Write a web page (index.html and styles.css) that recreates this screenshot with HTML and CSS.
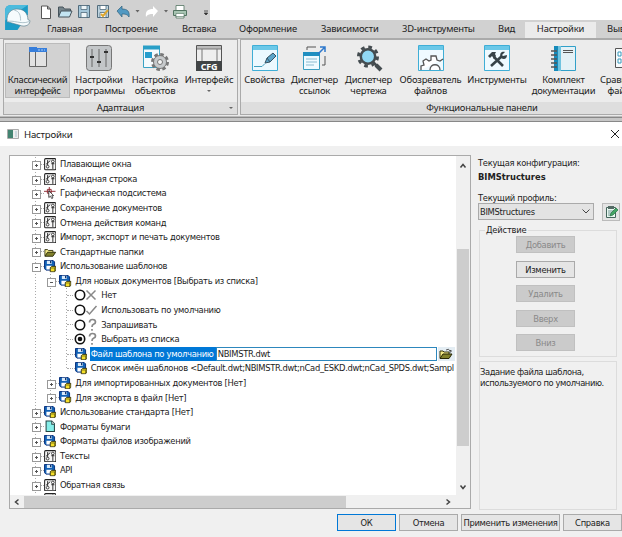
FILE: index.html
```html
<!DOCTYPE html>
<html lang="ru">
<head>
<meta charset="utf-8">
<title>Настройки</title>
<link rel="stylesheet" href="styles.css">
</head>
<body>
<svg class="defs" xmlns="http://www.w3.org/2000/svg">
<symbol id="sliders" viewBox="0 0 12 12"><rect x=".6" y=".6" width="10.8" height="10.8" rx="1" fill="#f8f8f8" stroke="#222"/><path d="M3.500 2v5M8.500 5v5.500M2 6l4-3.500M7 5.500h3" stroke="#222" fill="none" stroke-width=".9"/><circle cx="3.500" cy="8.300" r="1.300" fill="#fff" stroke="#222" stroke-width=".8"/><circle cx="8.500" cy="3.300" r="1.300" fill="#fff" stroke="#222" stroke-width=".8"/></symbol>
<symbol id="disk" viewBox="0 0 13 13"><path d="M.5.5h9l1.500 1.500v8.500h-9L.5 9z" fill="#1261b5" stroke="#062f7c"/><path d="M3 .7h5v3.500H3z" fill="#d9eafa"/><path d="M6.300 1h1.200v2.500H6.300z" fill="#082962"/><path d="M2.500 6h6v4h-6z" fill="#fff"/><path d="M6.500 8 8 6.600h4.300v4L11 12.300H6.500z" fill="#f5df28" stroke="#272710" stroke-width=".9"/><path d="M6.500 8.300H11v4M11 8.300l1.300-1.500" fill="none" stroke="#504c12" stroke-width=".7"/></symbol>
<symbol id="folder" viewBox="0 0 14 12"><path d="M1 10V3h3l1 1h5v2" fill="#f3e986" stroke="#343411"/><path d="M1 10.500 4 6h9l-3 4.500z" fill="#81812b" stroke="#262606"/></symbol>
<symbol id="page" viewBox="0 0 12 12"><path d="M2 1h5.500L10 3.500V11H2z" fill="#86eee9" stroke="#244"/><path d="M7.500 1v3H10" fill="#fff" stroke="#244"/></symbol>
<symbol id="cursor" viewBox="0 0 13 13"><path d="M0 4.500h12M5.500 0v10M3.500 2.500h4v4h-4z" stroke="#912d36" fill="none"/><path d="M5 4v7l1.700-1.500L8 12l1.300-.6-1.200-2.400h2z" fill="#fff" stroke="#222" stroke-width=".8"/></symbol>
</svg>

<div class="app">
<div class="quick">
<svg class="logo" viewBox="0 0 26 26"><path d="M1 25V7q0-6 6-6h16v9L13 25z" fill="#1c9bc6"/><path d="M1 24V7q0-6 6-6h16L1 16z" fill="#4cbbdd"/><path d="M3 17C2 8 8 4 14 5c6 0 9 5 9 10l2 1c0 4-4 6-8 5L3 17z" fill="#f6fbfd" stroke="#537989" stroke-width=".6"/><path d="M3 17c6-2 13 3 21 0M10 6c5 1 6 5 6 10" fill="none" stroke="#a1b8c1" stroke-width=".8"/></svg>
<svg class="qicons" viewBox="0 0 170 16">
<path d="M3.500 2h6l3 3v9.500h-9zM9.500 2v3h3" fill="#fff" stroke="#555"/>
<path d="M20.500 12.500V3H25l1.500 2h6v2" fill="#75848b" stroke="#46535b"/><path d="m20.500 13 2.500-6h11l-2.500 6z" fill="#c3e4f2" stroke="#46535b"/>
<path d="M40.500 1.500h11v12h-11z" fill="#a5c7da" stroke="#526c7c"/><path d="M43 1.500h6v4h-6zM43 8.500h6v5h-6z" fill="#eef5f8" stroke="#526c7c" stroke-width=".8"/>
<path d="M59.500 1.500h11v12h-11z" fill="#bdd3df" stroke="#526c7c"/><path d="M62 1.500h6v4h-6zM62 8.500h6v5h-6z" fill="#fff" stroke="#526c7c" stroke-width=".8"/><path d="m63 10 2 2 5-6" fill="none" stroke="#dda72e" stroke-width="2"/>
<path d="m79 7 5-5v3c5 0 8 2 7 8-2-3-4-3-7-3v3z" fill="#5299c2" stroke="#31627c" stroke-width=".7"/>
<path d="M97.500 6h4l-2 2.500zM126 6h4l-2 2.500z" fill="#666"/>
<path d="m120 7-5-5v3c-5 0-8 2-7 8 2-3 4-3 7-3v3z" fill="#fff"/>
<path d="M138 1.500h8v5h-8zM138 10h8v4h-8z" fill="#fff" stroke="#527361" stroke-width=".8"/><path d="M135.500 6.500h13v5h-13z" fill="#a7c4b2" stroke="#527361"/><path d="M138 9.500h8v3h-8z" fill="#fff" stroke="#527361" stroke-width=".6"/>
<path d="M166 7h4M166.300 9h3.400L168 11z" fill="#333" stroke="#333" stroke-width=".8"/>
</svg>
</div>
<nav class="tabs"><span class="t1">Главная</span><span class="t2">Построение</span><span class="t3">Вставка</span><span class="t4">Оформление</span><span class="t5">Зависимости</span><span class="t6">3D-инструменты</span><span class="t7">Вид</span><span class="t8 current">Настройки</span><span class="t9">Вывод</span></nav>
<div class="ribbon">
<section class="panel adapt">
<div class="tools">
<div class="tool b1 pressed"><svg viewBox="0 0 28 28"><path d="M5.500 7v15.500h17V7M11.500 7v15.500" fill="none" stroke="#666"/><path d="M6 8h5v14H6zM12 8h10v14H12z" fill="#e2e2e2"/><path d="M5 3h8v1h10v4H5z" fill="#377edb"/><path d="M14 6h7" stroke="#a8cef8" stroke-dasharray="2 1"/></svg><span>Классический<br>интерфейс</span></div>
<div class="tool b2"><svg viewBox="0 0 28 28"><rect x="1.500" y="1.500" width="25" height="25" rx="3" fill="#c3c6c8" stroke="#777"/><path d="M7 5v18M14 5v18M21 5v18" stroke="#666"/><path d="M5 13h4M12 18h4M19 8h4" stroke="#333" stroke-width="2"/></svg><span>Настройки<br>программы</span></div>
<div class="tool b3"><svg viewBox="0 0 28 28"><path d="M2.500 2.500h16v21h-16z" fill="#f5fafd" stroke="#3aa2c4"/><path d="M2 1.500h17v4H2z" fill="#299fc7"/><path d="M4 8h7v6H4z" fill="#269dcc"/><circle cx="19" cy="18" r="7.500" fill="none" stroke="#777" stroke-width="3" stroke-dasharray="3.500 2.390"/><circle cx="19" cy="18" r="6.500" fill="#c7cacc" stroke="#777"/><circle cx="19" cy="18" r="2.500" fill="#f5f5f5" stroke="#777"/></svg><span>Настройка<br>объектов</span></div>
<div class="tool b4"><svg viewBox="0 0 28 28"><path d="M1.500 1.500h25v16h-25z" fill="#eee" stroke="#555"/><path d="M2 2h24v3H2z" fill="#bbb"/><path d="M7 5v12M22 5v12M2 5h24" stroke="#777"/><path d="M1 17h26v10H1z" fill="#414446"/><text x="14" y="25.500" text-anchor="middle" class="cfg">CFG</text></svg><span>Интерфейс<br><i class="down"></i></span></div>
</div><footer>Адаптация<i class="down corner"></i></footer>
</section>
<section class="panel functional">
<div class="tools">
<div class="tool f1"><svg viewBox="0 0 28 28"><path d="M1.500 1.500h25v25h-25z" fill="#ecf9ff" stroke="#3faed6"/><path d="M2 2h24v4H2z" fill="#6bc8e8"/><path d="m14 19 2-5 6-5 3 3-6 6z" fill="#5ca5c9" stroke="#365263"/><path d="m16 14 3 4" stroke="#365263"/><path d="M3 22.500h8l3-3" stroke="#429fbd" fill="none"/></svg><span>Свойства</span></div>
<div class="tool f2"><svg viewBox="0 0 28 28"><path d="M6 6V3h9M24 12v9h-3" fill="none" stroke="#555"/><path d="M2.500 8.500h16v17h-16z" fill="#effaff" stroke="#3b9ec1"/><path d="M2 8h17v4H2z" fill="#208fc0"/><path d="M5 15h11M5 18h11M5 21h8" stroke="#8bbbd0"/><path d="m17 10 7-7M19 3h5v5" fill="none" stroke="#2e78cb" stroke-width="1.500"/></svg><span>Диспетчер<br>ссылок</span></div>
<div class="tool f3"><svg viewBox="0 0 28 28"><path d="m18 18 4 4" stroke="#444c50" stroke-width="2.500"/><path d="m21 21 5 5" stroke="#444c50" stroke-width="4"/><circle cx="13" cy="12.500" r="9.500" fill="none" stroke="#444c50" stroke-width="3" stroke-dasharray="3.700 3.760"/><circle cx="13" cy="12.500" r="7.200" fill="#91d8f4" stroke="#444c50" stroke-width="2.500"/></svg><span>Диспетчер<br>чертежа</span></div>
<div class="tool f4"><svg viewBox="0 0 28 28"><path d="M1.500 1.500h25v25h-25z" fill="#effaff" stroke="#3faed6"/><path d="M2 2h24v4H2z" fill="#6bc8e8"/><path d="M4 26v-4l3-1-1-4 3-2 3 2 2-1v-4h5l1 4 3 1 3-2M13 26c0-7 10-7 10 0" fill="#fff" stroke="#555" stroke-width="1.300"/></svg><span>Обозреватель<br>файлов</span></div>
<div class="tool f5"><svg viewBox="0 0 28 28"><path d="M1.500 1.500h25v25h-25z" fill="#effaff" stroke="#3faed6"/><path d="M2 2h24v4H2z" fill="#6bc8e8"/><path d="m8 22 11-10M11 13l9 9" stroke="#374348" stroke-width="2.600"/><path d="m5 12 4-4h4l-1 2 1 2-2 3-2-3-2 2zM22 8l-3 3 1 1 4-1c0 4-3 5-6 3-2-4 0-7 4-6z" fill="#374348"/></svg><span>Инструменты</span></div>
<div class="tool f6"><svg viewBox="0 0 28 28"><path d="M4 2h5v25H4z" fill="#168ab9"/><path d="M8.500 2.500h17v24h-17z" fill="#e4f1f6" stroke="#31a0c9"/><path d="M8 2h3v25H8z" fill="#70c3df"/><path d="M13 6.500h10M13 8.500h10" stroke="#555"/><path d="M1 7h6M1 11h6M1 15h6M1 19h6M1 23h6" stroke="#555" stroke-width="1.500"/></svg><span>Комплект<br>документации</span></div>
<div class="tool f7"><svg viewBox="0 0 28 28"><path d="M5.500 4.500h22v19h-22z" fill="#f7fbfd" stroke="#555"/><path d="M8 8h3v4H8zM13 8h3v4h-3zM8 15h3v4H8zM13 15h3v4h-3z" fill="#fff" stroke="#389abc"/></svg><span>Сравнение<br>файлов</span></div>
</div><footer>Функциональные панели</footer>
</section>
</div>
<div class="edge"></div>
</div>

<main class="dialog">
<header class="title"><svg viewBox="0 0 12 10"><path d="M.5.500h11v9H.5z" fill="#eee" stroke="#aaa"/><path d="M1 1h5v8H1z" fill="#438471"/><path d="M8 2h2v6H8z" fill="#ccd9df"/></svg><h1>Настройки</h1><svg class="close" viewBox="0 0 10 10"><path d="m1 1 8 8M9 1 1 9" stroke="#222"/></svg></header>
<div class="content">
<div class="treebox">
<div class="view">
<div class="tree">
<div class="row"><i class="box plus"></i><svg class="ico"><use href="#sliders"/></svg><span>Плавающие окна</span></div>
<div class="row"><i class="box plus"></i><svg class="ico"><use href="#sliders"/></svg><span>Командная строка</span></div>
<div class="row"><i class="box plus"></i><svg class="ico"><use href="#cursor"/></svg><span>Графическая подсистема</span></div>
<div class="row"><i class="box plus"></i><svg class="ico"><use href="#sliders"/></svg><span>Сохранение документов</span></div>
<div class="row"><i class="box plus"></i><svg class="ico"><use href="#sliders"/></svg><span>Отмена действия команд</span></div>
<div class="row"><i class="box plus"></i><svg class="ico"><use href="#sliders"/></svg><span>Импорт, экспорт и печать документов</span></div>
<div class="row"><i class="box plus"></i><svg class="ico"><use href="#folder"/></svg><span>Стандартные папки</span></div>
<div class="row"><i class="box"></i><svg class="ico"><use href="#disk"/></svg><span>Использование шаблонов</span></div>
<div class="row"><i class="guide"></i><i class="box"></i><svg class="ico"><use href="#disk"/></svg><span>Для новых документов [Выбрать из списка]</span></div>
<div class="row"><i class="guide"></i><i class="guide"></i><i class="guide leaf"></i><svg class="choice" viewBox="0 0 24 14"><circle cx="6" cy="7" r="4.700" fill="#fff" stroke="#111" stroke-width="1.600"/><path d="m12.500 2.500 9 9M21.500 2.500l-9 9" stroke="#888" stroke-width="1.500"/></svg><span>Нет</span></div>
<div class="row"><i class="guide"></i><i class="guide"></i><i class="guide leaf"></i><svg class="choice" viewBox="0 0 24 14"><circle cx="6" cy="7" r="4.700" fill="#fff" stroke="#111" stroke-width="1.600"/><path d="m12.500 8 3 3 7-8" stroke="#888" stroke-width="1.500" fill="none"/></svg><span>Использовать по умолчанию</span></div>
<div class="row"><i class="guide"></i><i class="guide"></i><i class="guide leaf"></i><svg class="choice" viewBox="0 0 24 14"><circle cx="6" cy="7" r="4.700" fill="#fff" stroke="#111" stroke-width="1.600"/><path d="M15.500 4.500q0-3 3-3t3 2.500q0 1.600-2 2.300-1.500.7-1.500 2.700M18 11v1.800" stroke="#888" stroke-width="1.700" fill="none"/></svg><span>Запрашивать</span></div>
<div class="row"><i class="guide"></i><i class="guide"></i><i class="guide leaf"></i><svg class="choice" viewBox="0 0 24 14"><circle cx="6" cy="7" r="4.700" fill="#fff" stroke="#111" stroke-width="1.600"/><circle cx="6" cy="7" r="2.300" fill="#111"/><path d="M15.500 4.500q0-3 3-3t3 2.500q0 1.600-2 2.300-1.500.7-1.500 2.700M18 11v1.800" stroke="#888" stroke-width="1.700" fill="none"/></svg><span>Выбрать из списка</span></div>
<div class="row selected"><i class="guide"></i><i class="guide"></i><i class="guide leaf"></i><svg class="ico"><use href="#disk"/></svg><span class="name">Файл шаблона по умолчанию</span><span class="edit">NBIMSTR.dwt</span><b class="browse"><svg viewBox="0 0 14 12"><use href="#folder"/><path d="M7 2q3-2 4 1l1-1v2h-2" fill="none" stroke="#333" stroke-width=".8"/></svg></b></div>
<div class="row"><i class="guide"></i><i class="guide"></i><i class="guide leaf last"></i><svg class="ico"><use href="#disk"/></svg><span class="list">Список имён шаблонов &lt;Default.dwt;NBIMSTR.dwt;nCad_ESKD.dwt;nCad_SPDS.dwt;Sampl</span></div>
<div class="row"><i class="guide"></i><i class="box plus"></i><svg class="ico"><use href="#disk"/></svg><span>Для импортированных документов [Нет]</span></div>
<div class="row"><i class="guide"></i><i class="box plus last"></i><svg class="ico"><use href="#disk"/></svg><span>Для экспорта в файл [Нет]</span></div>
<div class="row"><i class="box plus"></i><svg class="ico"><use href="#disk"/></svg><span>Использование стандарта [Нет]</span></div>
<div class="row"><i class="box plus"></i><svg class="ico"><use href="#page"/></svg><span>Форматы бумаги</span></div>
<div class="row"><i class="box plus"></i><svg class="ico"><use href="#disk"/></svg><span>Форматы файлов изображений</span></div>
<div class="row"><i class="box plus"></i><svg class="ico"><use href="#sliders"/></svg><span>Тексты</span></div>
<div class="row"><i class="box plus"></i><svg class="ico"><use href="#disk"/></svg><span>API</span></div>
<div class="row"><i class="box plus"></i><svg class="ico"><use href="#sliders"/></svg><span>Обратная связь</span></div>
<div class="row"><i class="guide"></i><svg class="ico"><use href="#sliders"/></svg></div>
</div>
<div class="vbar"><svg viewBox="0 0 8 6"><path d="m1.500 4.500 2.500-3 2.500 3"/></svg><div class="vthumb"></div><svg viewBox="0 0 8 6"><path d="m1.500 1.500 2.500 3 2.500-3"/></svg></div>
</div>
<div class="hbar"><svg viewBox="0 0 6 8"><path d="M4.500 1.500 1.500 4l3 2.500"/></svg><div class="hthumb"></div><svg viewBox="0 0 6 8"><path d="m1.500 1.500 3 2.500-3 2.500"/></svg></div>
</div>
<aside class="side">
<div class="label">Текущая конфигурация:</div>
<strong>BIMStructures</strong>
<div class="label profile">Текущий профиль:</div>
<div class="selectline"><div class="select"><span>BIMStructures</span><svg viewBox="0 0 8 5"><path d="m.5.500 3.500 3.500L7.500.500" fill="none" stroke="#444"/></svg></div>
<div class="iconbtn"><svg viewBox="0 0 14 14"><path d="M2.500 2.500h9v10h-9z" fill="#e8f8f0" stroke="#44665c"/><path d="M4 1h6v3H4z" fill="#546b65"/><path d="M4 6h6M4 8h4M4 10h3" stroke="#799"/><path d="m6 11 1-3 5-5 2 2-5 5z" fill="#43a665" stroke="#287345" stroke-width=".7"/></svg></div></div>
<fieldset><legend>Действие</legend><button disabled>Добавить</button><button>Изменить</button><button disabled>Удалить</button><button disabled>Вверх</button><button disabled>Вниз</button></fieldset>
<div class="help">Задание файла шаблона,<br>используемого по умолчанию.</div>
</aside>
</div>
<div class="actions"><button class="ok">ОК</button><button>Отмена</button><button class="apply">Применить изменения</button><button>Справка</button></div>
</main>
</body>
</html>
```
FILE: styles.css
```css
* { box-sizing: border-box; }
body { margin: 0; width: 622px; height: 537px; overflow: hidden; background: #f0f0f0; font: 9.3px/14px "DejaVu Sans Condensed", "DejaVu Sans", sans-serif; font-stretch: condensed; letter-spacing: -.3px; color: #222; }
.defs { position: absolute; width: 0; height: 0; }
svg { display: block; flex: none; }
i { font-style: normal; }
.app { height: 122px; background: #fff; overflow: hidden; font-family: "Noto Sans", sans-serif; font-size: 9.4px; letter-spacing: -.2px; font-stretch: normal; }
.quick { height: 20px; width: 210px; background: #d1d1d1; display: flex; position: relative; }
.logo { position: absolute; left: 4px; top: 4px; width: 27px; height: 27px; z-index: 1; }
.qicons { width: 170px; height: 16px; margin: 4px 0 0 38px; }
.tabs { height: 19px; background: #d1d1d1; display: flex; line-height: 18px; white-space: nowrap; border-bottom: 1px solid #aaa; overflow: hidden; }
.tabs span { flex: none; }
.t1 { margin-left: 47px; width: 58px; }
.t2 { width: 77px; }
.t3 { width: 57px; }
.t4 { width: 82px; }
.t5 { width: 81px; }
.t6 { width: 96px; }
.t7 { width: 27px; }
.t8 { width: 71px; }
.t9 { padding-left: 11px; }
.current { background: #ebebeb; text-align: center; margin-top: 2px; line-height: 14px; height: 17px; }
.ribbon { height: 77px; background: #e9e9e9; padding: 0 0 1px 3px; display: flex; gap: 2px; overflow: hidden; }
.panel { border: 1px solid #aaa; background: #ececec; display: flex; flex-direction: column; flex: none; }
.adapt { width: 235px; }
.functional { width: 420px; }
.tools { height: 62px; padding: 4px 0 0 2px; display: flex; }
.functional .tools { padding-left: 0; }
.tool { height: 53px; display: flex; flex-direction: column; align-items: center; line-height: 10.5px; text-align: center; white-space: nowrap; flex: none; }
.tool svg { width: 28px; height: 28px; margin-bottom: 3px; }
.b1 { width: 63px; }
.b2 { width: 60px; }
.b3 { width: 52px; }
.b4 { width: 56px; }
.f1 { width: 47px; }
.f2 { width: 53px; }
.f3 { width: 55px; }
.f4 { width: 69px; }
.f5 { width: 64px; }
.f6 { width: 69px; }
.f7 { width: 52px; }
.pressed { background: #d2d2d2; outline: 1px solid #bbb; }
.pressed span { letter-spacing: -.35px; }
.cfg { font: bold 9px "Noto Sans", sans-serif; fill: #fff; }
.down { display: inline-block; border: 2px solid transparent; border-top-color: #666; border-bottom: 0; vertical-align: middle; }
.panel footer { flex: 1; background: #dedede; display: flex; align-items: center; justify-content: center; line-height: 12px; position: relative; }
.functional footer { padding-right: 0; padding-left: 64px; }
.corner { position: absolute; right: 4px; }
.edge { height: 6px; background: linear-gradient(#bbb 0 1px, #888 1px 2px, #c6c6c6 2px 5px, #888 5px); }
.title { height: 24px; background: #fff; display: flex; align-items: center; padding: 0 2px 0 7px; }
.title svg { width: 12px; height: 10px; }
.title h1 { font: 9.6px "Noto Sans", sans-serif; letter-spacing: -.2px; margin: 0 auto 0 5px; }
.title .close { width: 10px; height: 10px; }
.content { display: flex; height: 363px; padding: 9px 5px 0 9px; }
.treebox { width: 462px; height: 354px; border: 1px solid #aaa; background: #f0f0f0; flex: none; }
.view { display: flex; height: 339px; }
.tree { width: 446px; background: #fff; overflow: hidden; padding: 1px 0 0 18px; }
.row { height: 14.59px; display: flex; align-items: center; white-space: nowrap; }
.row > span { line-height: 14px; }
.box, .guide { width: 15.4px; height: 100%; flex: none; position: relative; background: repeating-linear-gradient(#aaa 0 1px, transparent 1px 3px) 7px 0 / 1px 100% no-repeat; }
.box::before { content: ""; position: absolute; z-index: 1; left: 4px; top: 4px; width: 7px; height: 7px; border: 1px solid #999; background: linear-gradient(#555, #555) center / 3px 1px no-repeat, #fff; }
.plus::before { background: linear-gradient(#555, #555) center / 3px 1px no-repeat, linear-gradient(#555, #555) center / 1px 3px no-repeat, #fff; }
.box::after, .leaf::after { content: ""; position: absolute; left: 8px; top: 7px; width: 8px; border-top: 1px dotted #aaa; }
.last { background-size: 1px 50%; }
.ico { width: 12.5px; height: 12.5px; margin: 0 3.500px 0 .5px; }
.choice { width: 24px; height: 14px; margin-right: 3px; }
.name { background: #0078d7; color: #fff; width: 126px; height: 14px; padding-left: 1px; margin-left: -1px; flex: none; }
.edit { width: 221px; height: 14px; border: 1px solid #2d87bd; line-height: 12px !important; padding-left: 1px; flex: none; }
.browse { width: 17px; height: 14px; background: #e4edf3; padding: 1px 1px 0; margin-left: 1px; }
.browse svg { width: 14px; height: 12px; }
.vbar { width: 14px; display: flex; flex-direction: column; align-items: center; padding: 7px 0 5px; }
.vbar svg { width: 8px; height: 6px; }
.vbar path, .hbar path { fill: none; stroke: #444; stroke-width: 1.500; }
.vthumb { width: 12px; height: 197px; background: #cdcdcd; margin: 80px 0 38px; flex: none; }
.hbar { height: 13px; display: flex; align-items: center; padding-left: 4px; }
.hbar svg { width: 6px; height: 8px; }
.hthumb { width: 322px; height: 12px; background: #cdcdcd; margin: 0 99px 0 4px; }
.side { padding-left: 7px; width: 146px; }
.label { height: 14px; line-height: 15px; white-space: nowrap; }
.side strong { display: block; height: 22px; line-height: 15px; letter-spacing: 0; }
.selectline { display: flex; justify-content: space-between; height: 18px; }
.profile { height: 12px; line-height: 13px; }
.select { width: 116px; height: 17px; border: 1px solid #aaa; background: #e3e3e3; display: flex; align-items: center; justify-content: space-between; padding: 0 3px 0 1px; }
.select svg { width: 8px; height: 5px; }
.iconbtn { width: 18px; height: 18px; border: 1px solid #bbb; background: #e4e4e4; padding: 1px; margin-right: -3px; }
.iconbtn svg { width: 14px; height: 14px; }
fieldset { width: 138px; height: 133px; border: 1px solid #dcdcdc; margin: 3px 0 0 1px; padding: 0; display: flex; flex-direction: column; align-items: center; position: relative; }
legend { margin-left: 5px; padding: 0 1px; line-height: 12px; letter-spacing: -.2px; }
button { font: inherit; letter-spacing: inherit; color: #222; border: 1px solid #aaa; background: #e5e5e5; padding: 0; white-space: nowrap; }
fieldset button { width: 59px; height: 17px; margin: 0 5px 7.500px 0; line-height: 13px; flex: none; }
button:disabled { background: #cbcbcb; color: #898989; border-color: #c0c0c0; }
.help { width: 138px; height: 149px; border: 1px solid #dcdcdc; margin: 4px 0 0 1px; line-height: 11px; padding-top: 4px; white-space: nowrap; letter-spacing: -.4px; }
.actions { display: flex; padding: 5px 0 0 337px; gap: 3px; }
.actions button { width: 59px; height: 17px; line-height: 14px; }
.actions .ok { border: 1.500px solid #0078d7; }
.actions .apply { width: 99px; }
```
